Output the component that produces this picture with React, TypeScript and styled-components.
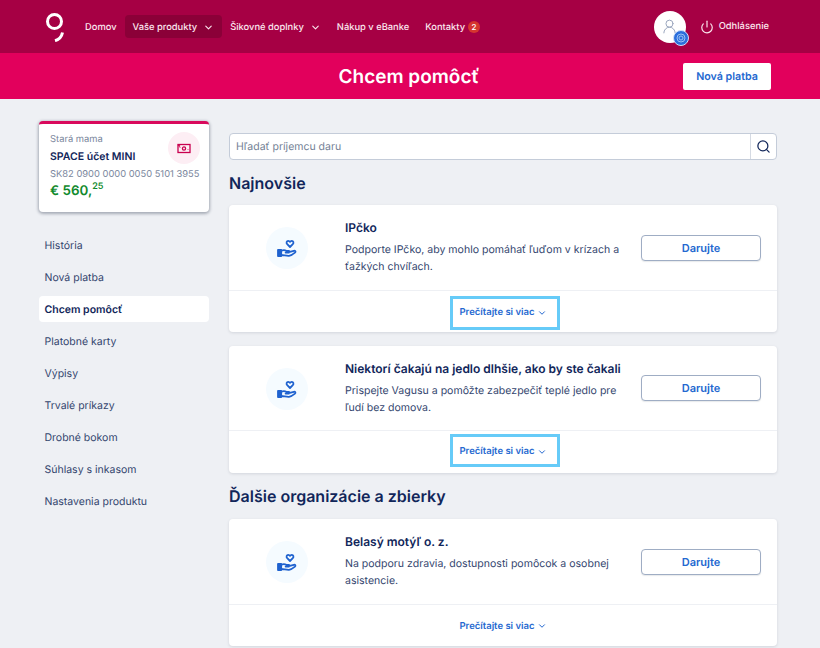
import React from "react";
import styled, { createGlobalStyle } from "styled-components";
import { ChevronDown, Power, Search, UserRound } from "lucide-react";

const Global = createGlobalStyle`
  html, body { margin: 0; padding: 0; height: 648px; overflow: hidden; background: #eef0f4; }
  body {
    font-family: Inter, "Liberation Sans", sans-serif;
    color: #0f2557;
    text-rendering: geometricPrecision;
    -webkit-font-smoothing: antialiased;
  }
  * { box-sizing: border-box; }
`;

const Page = styled.div`
  width: 820px;
  height: 648px;
  overflow: hidden;
`;

const TopBar = styled.header`
  height: 53px;
  background: #a60044;
  display: flex;
  align-items: center;
  padding: 0 51px 0 45px;
`;

const Logo = styled.svg`
  width: 20px;
  height: 30px;
  margin-right: 12px;
  flex: none;
`;

const TopNav = styled.nav`
  display: flex;
  align-items: center;
  flex: 1;
`;

const NavLink = styled.a<{ $active?: boolean }>`
  display: flex;
  align-items: center;
  gap: 6px;
  height: 23px;
  padding: 1px 8px 0;
  border-radius: 4px;
  color: #fbe6ee;
  font-size: 9.35px;
  font-weight: 500;
  white-space: nowrap;
  background: ${(p) => (p.$active ? "#8b0038" : "transparent")};
`;

const Badge = styled.span`
  width: 12px;
  height: 12px;
  margin-left: -3px;
  border-radius: 50%;
  background: #d5352f;
  color: #fff;
  font-size: 8px;
  font-weight: 500;
  display: flex;
  align-items: center;
  justify-content: center;
`;

const AvatarWrap = styled.div`
  position: relative;
  width: 32px;
  height: 32px;
  border-radius: 50%;
  background: #fff;
  display: flex;
  align-items: center;
  justify-content: center;
  color: #9aa6bd;
  margin-right: 14px;
`;

const AvatarBadge = styled.span`
  position: absolute;
  right: -3px;
  bottom: -3px;
  width: 16px;
  height: 16px;
  border-radius: 50%;
  background: #2b6fdc;
  border: 1px solid #cfe0fa;
  display: flex;
  align-items: center;
  justify-content: center;
`;

const Logout = styled.a`
  display: flex;
  align-items: center;
  gap: 5px;
  color: #fbe6ee;
  font-size: 9.4px;
  font-weight: 500;
`;

const TitleBar = styled.div`
  position: relative;
  height: 46px;
  background: #e2005c;
  display: flex;
  align-items: center;
  justify-content: center;
  padding-right: 2px;
`;

const PageTitle = styled.h1`
  margin: 0;
  color: #fff;
  font-size: 19px;
  font-weight: 600;
`;

const NewPayment = styled.button`
  position: absolute;
  left: 683px;
  top: 10px;
  width: 88px;
  height: 27px;
  border: 0;
  border-radius: 2px;
  background: #fff;
  color: #2468d0;
  font: 600 10.7px Inter, sans-serif;
  text-rendering: geometricPrecision;
`;

const Body = styled.div`
  display: flex;
  padding: 22px 43px 0 39px;
  gap: 20px;
`;

const Side = styled.aside`
  width: 170px;
  flex: none;
`;

const AccountCard = styled.div`
  position: relative;
  height: 91px;
  background: #fff;
  border-top: 3px solid #d9095c;
  border-radius: 4px;
  box-shadow: 0 1px 3px 1px rgba(60, 70, 90, 0.4);
  padding: 9px 0 0 11px;
`;

const Owner = styled.div`
  font-size: 9.4px;
  line-height: 14px;
  color: #7b879d;
`;

const AccountName = styled.div`
  font-size: 10.5px;
  line-height: 14px;
  margin-top: 3px;
  font-weight: 600;
  color: #11265a;
`;

const Iban = styled.div`
  font-size: 9.35px;
  line-height: 14px;
  margin-top: 4px;
  color: #7b879d;
  white-space: nowrap;
`;

const Amount = styled.div`
  font-size: 13.4px;
  line-height: 18px;
  font-weight: 600;
  color: #118a2c;
  white-space: nowrap;
`;

const Cents = styled.sup`
  font-size: 9px;
  line-height: 0;
  vertical-align: 6px;
`;

const CardIcon = styled.div`
  position: absolute;
  right: 9px;
  top: 8px;
  width: 32px;
  height: 32px;
  border-radius: 50%;
  background: #fdeef4;
  display: flex;
  align-items: center;
  justify-content: center;
`;

const SideNav = styled.nav`
  margin-top: 20px;
  display: flex;
  flex-direction: column;
  gap: 6px;
`;

const SideItem = styled.a<{ $active?: boolean }>`
  height: 26px;
  display: flex;
  align-items: center;
  padding-left: 5.5px;
  font-size: 10.5px;
  border-radius: 4px;
  color: ${(p) => (p.$active ? "#11265a" : "#33456e")};
  font-weight: ${(p) => (p.$active ? 600 : 400)};
  background: ${(p) => (p.$active ? "#fff" : "transparent")};
`;

const Main = styled.main`
  width: 548px;
  flex: none;
  padding-top: 12px;
`;

const SearchBox = styled.div`
  display: flex;
  height: 27px;
  background: #fff;
  border: 1px solid #c4ccd9;
  border-radius: 4px;
`;

const SearchText = styled.div`
  flex: 1;
  padding-left: 6px;
  display: flex;
  align-items: center;
  font-size: 10.5px;
  color: #737f95;
`;

const SearchButton = styled.div`
  width: 26px;
  border-left: 1px solid #d5dae3;
  display: flex;
  align-items: center;
  justify-content: center;
  color: #11265a;
`;

const Heading = styled.h2<{ $top: number; $bottom: number }>`
  margin: ${(p) => p.$top}px 0 ${(p) => p.$bottom}px;
  font-size: 16px;
  line-height: 22px;
  font-weight: 600;
  color: #11265a;
`;

const Card = styled.section`
  height: 127px;
  margin-bottom: 14px;
  background: #fff;
  border-radius: 4px;
  box-shadow: 0 1px 3px rgba(60, 70, 90, 0.15);
  display: flex;
  flex-direction: column;
`;

const CardTop = styled.div<{ $compact?: boolean }>`
  height: ${(p) => (p.$compact ? 85 : 86)}px;
  flex: none;
  border-bottom: 1px solid #eef0f4;
  display: flex;
  padding-left: 37px;
`;

const IconCircle = styled.div`
  width: 42px;
  height: 42px;
  margin-top: 22px;
  border-radius: 50%;
  background: #f5fbff;
  display: flex;
  align-items: center;
  justify-content: center;
  flex: none;
`;

const CardText = styled.div`
  width: 296px;
  margin-left: 37px;
  padding-top: 15px;
`;

const CardTitle = styled.div`
  font-size: 12px;
  line-height: 16px;
  font-weight: 600;
  color: #11265a;
`;

const CardDesc = styled.div`
  font-size: 10.55px;
  line-height: 16.5px;
  margin-top: 6px;
  color: #33456e;
`;

const Donate = styled.button<{ $compact?: boolean }>`
  width: 120px;
  height: 26px;
  margin: ${(p) => (p.$compact ? 29 : 30)}px 0 0 0;
  background: #fff;
  border: 1px solid #9fadc4;
  border-radius: 4px;
  color: #2468d0;
  font: 600 11px Inter, sans-serif;
  text-rendering: geometricPrecision;
  box-shadow: 0 1px 1px rgba(60, 70, 90, 0.12);
`;

const CardBottom = styled.div`
  flex: 1;
  display: flex;
  justify-content: center;
`;

const More = styled.a<{ $top?: number; $height?: number; $pad?: number }>`
  width: 110px;
  margin: ${(p) => p.$top ?? 3}px 0 0 3px;
  height: ${(p) => p.$height ?? 34}px;
  padding: 2px 3px ${(p) => p.$pad ?? 0}px 0;
  display: flex;
  align-items: center;
  justify-content: center;
  gap: 2px;
  color: #2468d0;
  font-size: 9.5px;
  font-weight: 600;
  white-space: nowrap;
  border: 3px solid ${(p) => (p.$height ? "#66cbf8" : "transparent")};
`;

const HandHeart = () => (
  <svg width="20" height="21" viewBox="0 0 20 21" fill="none" stroke="#1f62cf" strokeWidth="1.8" strokeLinejoin="round" strokeLinecap="round">
    <path d="M13 9 10.2 6.2C9 5 9.6 2.8 11.2 2.8c.9 0 1.4.4 1.8 1.1.4-.7.9-1.1 1.8-1.1 1.6 0 2.2 2.2 1 3.4z" />
    <path d="M1 12h3.2v6H1z" fill="#1f62cf" />
    <path d="M4.2 12.8c2-1 3.6-1 5 0h2.6c1 0 1 1.8 0 1.8H8.6M11.8 14.2l5-1.4c1.4-.4 2.2 1 1.2 1.8-2 1.6-4 3-6 3.2-2.4.2-5-.7-7.8-.8" />
  </svg>
);

const Cash = () => (
  <svg width="14" height="11" viewBox="0 0 14 11" fill="none" stroke="#c9004f" strokeWidth="1.3">
    <rect x="1" y="1.5" width="12" height="8" />
    <circle cx="7" cy="5.5" r="1.6" />
    <path d="M3 4v.6M11 6.4v.6M1 1.5 3 3.5" />
  </svg>
);

type Item = { title: string; desc: string[]; top?: number; height?: number; pad?: number; compact?: boolean };

const items: Item[] = [
  { title: "IPčko", desc: ["Podporte IPčko, aby mohlo pomáhať ľuďom v krízach a", "ťažkých chvíľach."], top: 5, height: 34, pad: 3 },
  { title: "Niektorí čakajú na jedlo dlhšie, ako by ste čakali", desc: ["Prispejte Vagusu a pomôžte zabezpečiť teplé jedlo pre", "ľudí bez domova."], top: 3, height: 33, compact: true },
];

const DonationCard = ({ title, desc, top, height, pad, compact }: Item) => (
  <Card>
    <CardTop $compact={compact}>
      <IconCircle><HandHeart /></IconCircle>
      <CardText>
        <CardTitle>{title}</CardTitle>
        <CardDesc>{desc[0]}<br />{desc[1]}</CardDesc>
      </CardText>
      <Donate $compact={compact}>Darujte</Donate>
    </CardTop>
    <CardBottom>
      <More $top={top} $height={height} $pad={pad}>Prečítajte si viac <ChevronDown size={10} strokeWidth={2.4} /></More>
    </CardBottom>
  </Card>
);

const sideLinks = ["História", "Nová platba", "Chcem pomôcť", "Platobné karty", "Výpisy", "Trvalé príkazy", "Drobné bokom", "Súhlasy s inkasom", "Nastavenia produktu"];

export default function App() {
  return (
    <Page>
      <Global />
      <TopBar>
        <Logo viewBox="0 0 20 30" fill="none" stroke="#fff" strokeWidth="3">
          <circle cx="9.5" cy="9.5" r="7" />
          <path d="M17.5 20.5c-.8 4.2-3.4 7-7.5 8.2" strokeLinecap="butt" />
        </Logo>
        <TopNav>
          <NavLink>Domov</NavLink>
          <NavLink $active>Vaše produkty <ChevronDown size={11} strokeWidth={2.4} /></NavLink>
          <NavLink>Šikovné doplnky <ChevronDown size={11} strokeWidth={2.4} /></NavLink>
          <NavLink>Nákup v eBanke</NavLink>
          <NavLink>Kontakty <Badge>2</Badge></NavLink>
        </TopNav>
        <AvatarWrap>
          <UserRound size={17} strokeWidth={1.4} />
          <AvatarBadge>
            <svg width="10" height="10" viewBox="0 0 10 10" fill="none" stroke="#9cc2f5" strokeWidth="1">
              <circle cx="5" cy="5" r="4" />
              <circle cx="5" cy="5" r="2" />
            </svg>
          </AvatarBadge>
        </AvatarWrap>
        <Logout><Power size={14} strokeWidth={2} /> Odhlásenie</Logout>
      </TopBar>
      <TitleBar>
        <PageTitle>Chcem pomôcť</PageTitle>
        <NewPayment>Nová platba</NewPayment>
      </TitleBar>
      <Body>
        <Side>
          <AccountCard>
            <Owner>Stará mama</Owner>
            <AccountName>SPACE účet MINI</AccountName>
            <Iban>SK82 0900 0000 0050 5101 3955</Iban>
            <Amount>€ 560,<Cents>25</Cents></Amount>
            <CardIcon><Cash /></CardIcon>
          </AccountCard>
          <SideNav>
            {sideLinks.map((l) => (
              <SideItem key={l} $active={l === "Chcem pomôcť"}>{l}</SideItem>
            ))}
          </SideNav>
        </Side>
        <Main>
          <SearchBox>
            <SearchText>Hľadať príjemcu daru</SearchText>
            <SearchButton><Search size={15} strokeWidth={2} /></SearchButton>
          </SearchBox>
          <Heading $top={12} $bottom={11}>Najnovšie</Heading>
          {items.map((i) => <DonationCard key={i.title} {...i} />)}
          <Heading $top={-2} $bottom={12}>Ďalšie organizácie a zbierky</Heading>
          <DonationCard title="Belasý motýľ o. z." desc={["Na podporu zdravia, dostupnosti pomôcok a osobnej", "asistencie."]} />
        </Main>
      </Body>
    </Page>
  );
}
